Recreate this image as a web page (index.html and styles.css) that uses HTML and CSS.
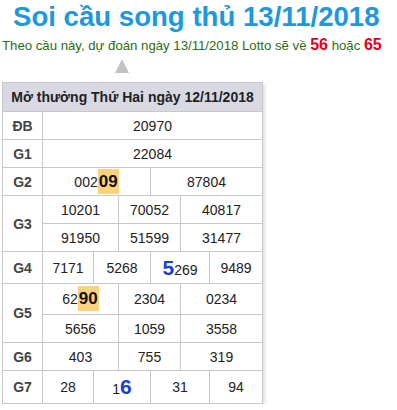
FILE: index.html
```html
<!DOCTYPE html>
<html lang="vi">
<head>
<meta charset="utf-8">
<link rel="stylesheet" href="styles.css">
</head>
<body>
<div class="page">
  <h1 class="title">Soi cầu song thủ 13/11/2018</h1>
  <p class="predict">Theo cầu này, dự đoán ngày 13/11/2018 Lotto sẽ về <b class="red">56</b> hoặc <b class="red">65</b></p>
  <div class="arrow-row"><span class="arrow"></span></div>
  <table class="kq">
    <colgroup>
      <col class="c0"><col class="c1"><col class="c2"><col class="c3"><col class="c4"><col class="c5"><col class="c6">
    </colgroup>
    <tr><th class="head" colspan="7">Mở thưởng Thứ Hai ngày 12/11/2018</th></tr>
    <tr><td class="lbl">ĐB</td><td colspan="6">20970</td></tr>
    <tr><td class="lbl">G1</td><td colspan="6">22084</td></tr>
    <tr><td class="lbl">G2</td><td colspan="3">002<span class="hl">09</span></td><td colspan="3">87804</td></tr>
    <tr><td class="lbl" rowspan="2">G3</td><td colspan="2">10201</td><td colspan="2">70052</td><td colspan="2">40817</td></tr>
    <tr><td colspan="2">91950</td><td colspan="2">51599</td><td colspan="2">31477</td></tr>
    <tr class="g4"><td class="lbl">G4</td><td>7171</td><td colspan="2">5268</td><td colspan="2"><span class="blue">5</span>269</td><td>9489</td></tr>
    <tr class="g5a"><td class="lbl" rowspan="2">G5</td><td colspan="2">62<span class="hl">90</span></td><td colspan="2">2304</td><td colspan="2">0234</td></tr>
    <tr><td colspan="2">5656</td><td colspan="2">1059</td><td colspan="2">3558</td></tr>
    <tr><td class="lbl">G6</td><td colspan="2">403</td><td colspan="2">755</td><td colspan="2">319</td></tr>
    <tr class="g7"><td class="lbl">G7</td><td>28</td><td colspan="2">1<span class="blue">6</span></td><td colspan="2">31</td><td>94</td></tr>
  </table>
</div>
</body>
</html>
```
FILE: styles.css
```css
html, body {
  margin: 0;
  padding: 0;
  background: #fff;
}
.page {
  padding: 0 0 0 2px;
  font-family: "Liberation Sans", Arial, sans-serif;
}
.title {
  margin: 0;
  padding-left: 11px;
  font-size: 27.6px;
  line-height: 34px;
  font-weight: bold;
  color: #1e97dd;
}
.predict {
  margin: 2px 0 0;
  font-size: 13.2px;
  line-height: 18px;
  color: #2f6a12;
}
.red {
  color: #e3001b;
  font-size: 16px;
}
.arrow-row {
  height: 27px;
  padding-left: 113px;
  padding-top: 4px;
  box-sizing: border-box;
}
.arrow {
  display: block;
  width: 0;
  height: 0;
  border-left: 7.5px solid transparent;
  border-right: 7.5px solid transparent;
  border-bottom: 14px solid #c2c2c2;
}
.kq {
  border-collapse: collapse;
  width: 260px;
  table-layout: fixed;
  font-size: 14px;
  color: #222;
  box-shadow: 2px 2px 3px rgba(0,0,0,0.12);
}
.c0 { width: 40px; }
.c1 { width: 51px; }
.c2 { width: 25px; }
.c3 { width: 32px; }
.c4 { width: 30px; }
.c5 { width: 29px; }
.c6 { width: 53px; }
.kq td, .kq th {
  border: 1px solid #c8c8c8;
  text-align: center;
  height: 27px;
  padding: 0;
}
.kq th.head {
  background: #d8d9e2;
  font-size: 14px;
  font-weight: bold;
  color: #222;
  height: 28px;
  white-space: nowrap;
}
.kq td.lbl {
  font-weight: bold;
  color: #444;
}
.kq tr.g4 td {
  height: 31px;
}
.kq tr.g5a td {
  height: 30px;
}
.kq tr.g7 td {
  height: 32px;
}
.hl {
  background: #fdd27e;
  font-weight: bold;
  font-size: 17px;
  color: #111;
  padding: 3px 1px;
}
.blue {
  color: #1a3ed3;
  font-weight: bold;
  font-size: 21px;
}
```
